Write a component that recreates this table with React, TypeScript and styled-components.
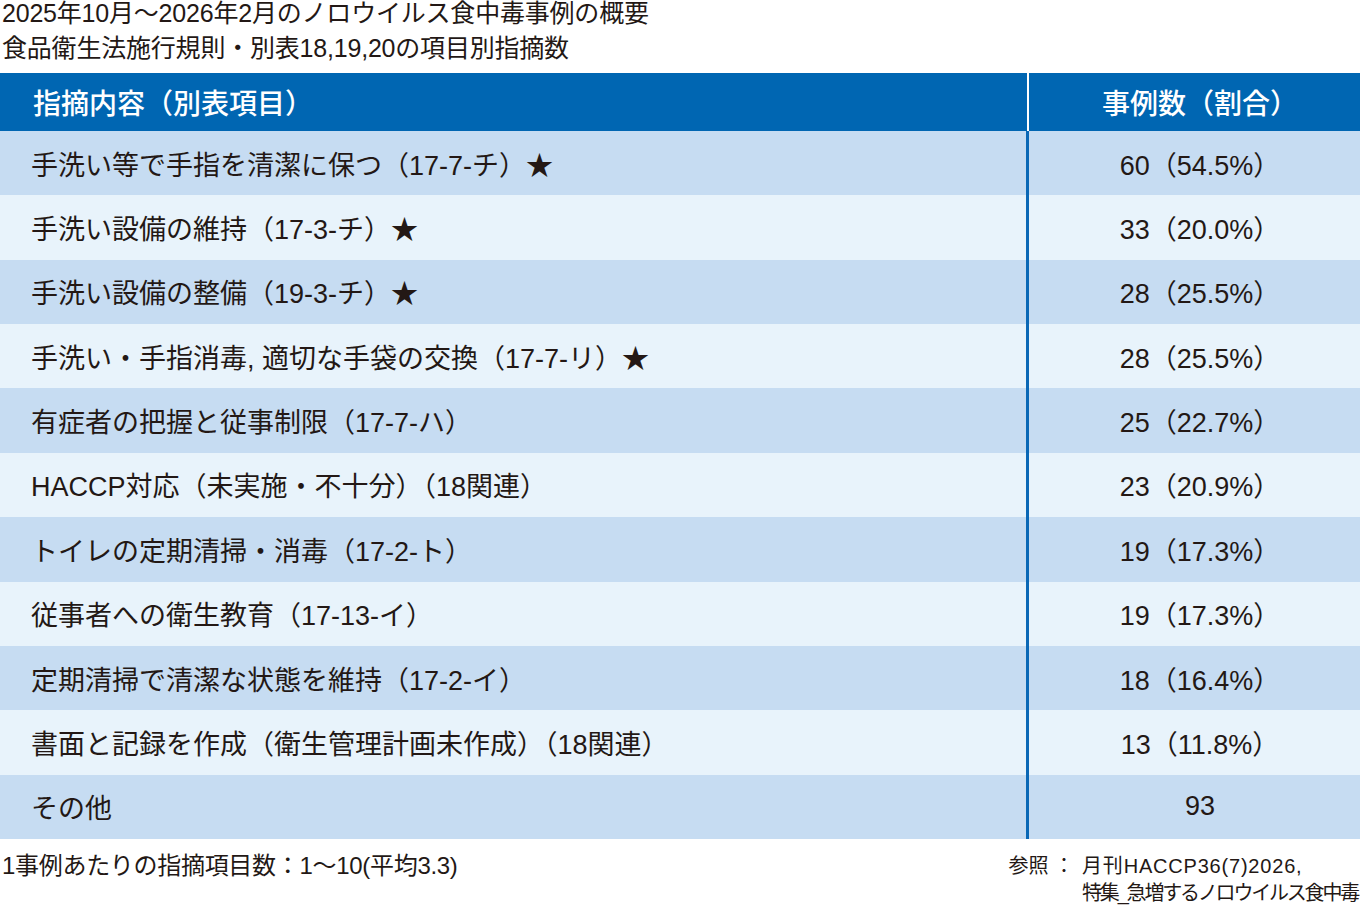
import React from "react";
import styled, { createGlobalStyle } from "styled-components";

const Global = createGlobalStyle`
  html, body { margin: 0; padding: 0; background: #ffffff; }
  body { font-family: "Liberation Sans", "Noto Sans CJK JP", sans-serif; color: #231815; }
`;

const Page = styled.div`
  width: 1360px;
  height: 910px;
  display: flex;
  flex-direction: column;
  overflow: hidden;
`;

const TitleBlock = styled.div`
  display: flex;
  flex-direction: column;
  gap: 9px;
  padding-left: 2px;
  height: 73px;
  box-sizing: border-box;
`;

const TitleLine = styled.div`
  font-size: 25px;
  line-height: 26px;
  letter-spacing: -0.2px;
  white-space: nowrap;
`;

const Table = styled.div`
  display: grid;
  grid-template-columns: 1026px 3px 331px;
  grid-template-rows: 58px repeat(11, 64.36px);
`;

const HeadCell = styled.div<{ $align: "left" | "center" }>`
  background: #0066b2;
  color: #ffffff;
  font-size: 28px;
  font-weight: 500;
  display: flex;
  align-items: center;
  justify-content: ${(p) => (p.$align === "left" ? "flex-start" : "center")};
  padding-left: ${(p) => (p.$align === "left" ? "33px" : "11px")};
  white-space: nowrap;
`;

const HeadDivider = styled.div`
  background: #0066b2;
  display: flex;
  justify-content: center;
  &::after {
    content: "";
    width: 2px;
    background: #ffffff;
  }
`;

const Cell = styled.div<{ $shade: boolean; $align: "left" | "center" }>`
  background: ${(p) => (p.$shade ? "#c6dcf2" : "#e8f3fb")};
  font-size: 27px;
  display: flex;
  align-items: center;
  justify-content: ${(p) => (p.$align === "left" ? "flex-start" : "center")};
  padding-left: ${(p) => (p.$align === "left" ? "31px" : "11px")};
  white-space: nowrap;
`;

const Divider = styled.div`
  background: #0a68b6;
`;

const Footer = styled.div`
  display: flex;
  justify-content: space-between;
  padding-top: 14px;
`;

const Note = styled.div`
  font-size: 24px;
  line-height: 26px;
  padding-left: 2px;
  white-space: nowrap;
  letter-spacing: -0.3px;
`;

const Ref = styled.div`
  display: grid;
  grid-template-columns: auto auto;
  column-gap: 8px;
  font-size: 20px;
  line-height: 27px;
  padding-right: 2px;
  white-space: nowrap;
`;

const RefLines = styled.div`
  display: flex;
  flex-direction: column;
`;

const RefLine = styled.span<{ $spacing: number }>`
  letter-spacing: ${(p) => p.$spacing}px;
`;

const rows: [string, string][] = [
  ["手洗い等で手指を清潔に保つ（17-7-チ）★", "60（54.5%）"],
  ["手洗い設備の維持（17-3-チ）★", "33（20.0%）"],
  ["手洗い設備の整備（19-3-チ）★", "28（25.5%）"],
  ["手洗い・手指消毒, 適切な手袋の交換（17-7-リ）★", "28（25.5%）"],
  ["有症者の把握と従事制限（17-7-ハ）", "25（22.7%）"],
  ["HACCP対応（未実施・不十分）（18関連）", "23（20.9%）"],
  ["トイレの定期清掃・消毒（17-2-ト）", "19（17.3%）"],
  ["従事者への衛生教育（17-13-イ）", "19（17.3%）"],
  ["定期清掃で清潔な状態を維持（17-2-イ）", "18（16.4%）"],
  ["書面と記録を作成（衛生管理計画未作成）（18関連）", "13（11.8%）"],
  ["その他", "93"],
];

export default function App() {
  return (
    <Page>
      <Global />
      <TitleBlock>
        <TitleLine>2025年10月～2026年2月のノロウイルス食中毒事例の概要</TitleLine>
        <TitleLine>食品衛生法施行規則・別表18,19,20の項目別指摘数</TitleLine>
      </TitleBlock>
      <Table>
        <HeadCell $align="left">指摘内容（別表項目）</HeadCell>
        <HeadDivider />
        <HeadCell $align="center">事例数（割合）</HeadCell>
        {rows.map(([label, value], i) => (
          <React.Fragment key={i}>
            <Cell $shade={i % 2 === 0} $align="left">{label}</Cell>
            <Divider />
            <Cell $shade={i % 2 === 0} $align="center">{value}</Cell>
          </React.Fragment>
        ))}
      </Table>
      <Footer>
        <Note>1事例あたりの指摘項目数：1～10(平均3.3)</Note>
        <Ref>
          <span>参照 ：</span>
          <RefLines>
            <RefLine $spacing={0.8}>月刊HACCP36(7)2026,</RefLine>
            <RefLine $spacing={-2.2}>特集_急増するノロウイルス食中毒</RefLine>
          </RefLines>
        </Ref>
      </Footer>
    </Page>
  );
}
